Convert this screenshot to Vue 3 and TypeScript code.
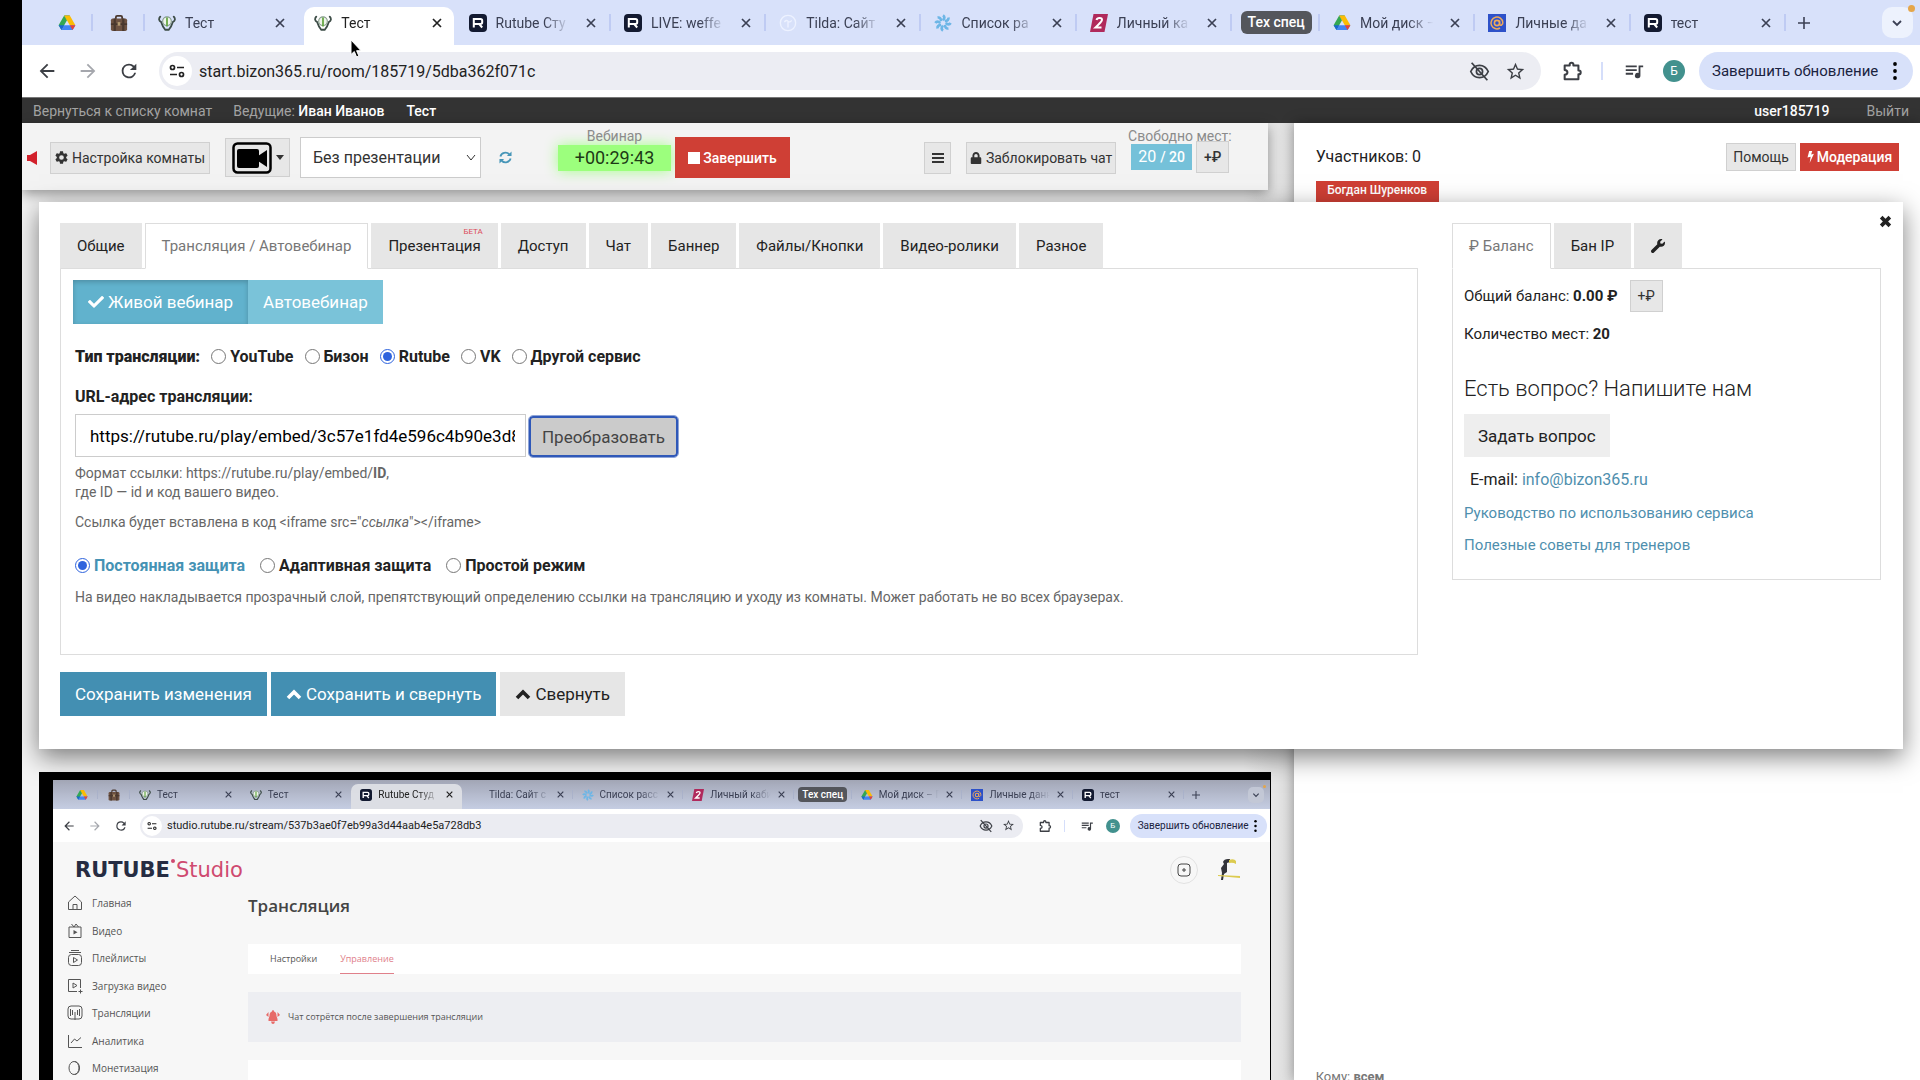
<script setup lang="ts">
import { ref } from 'vue'

interface Tab {
  title: string
  icon: string
  active?: boolean
  plain?: boolean
}

const tabs: Tab[] = [
  { title: 'Тест', icon: 'bizon', plain: true },
  { title: 'Тест', icon: 'bizon', active: true },
  { title: 'Rutube Сту', icon: 'rutube' },
  { title: 'LIVE: weffe', icon: 'rutube' },
  { title: 'Tilda: Сайт', icon: 'tilda' },
  { title: 'Список ра', icon: 'snow' },
  { title: 'Личный ка', icon: 'zed' },
]
const groupTabs: Tab[] = [
  { title: 'Мой диск –', icon: 'drive' },
  { title: 'Личные да', icon: 'mail' },
  { title: 'тест', icon: 'rutube' },
]
const streamTabs: Tab[] = [
  { title: 'Тест', icon: 'bizon', plain: true },
  { title: 'Тест', icon: 'bizon', plain: true },
  { title: 'Rutube Студ', icon: 'rutube', active: true },
  { title: 'Tilda: Сайт с', icon: '' },
  { title: 'Список расс', icon: 'snow' },
  { title: 'Личный каби', icon: 'zed' },
]
const streamGroupTabs: Tab[] = [
  { title: 'Мой диск – Г', icon: 'drive' },
  { title: 'Личные данн', icon: 'mail' },
  { title: 'тест', icon: 'rutube' },
]

const sections = ['Общие', 'Трансляция / Автовебинар', 'Презентация', 'Доступ', 'Чат', 'Баннер', 'Файлы/Кнопки', 'Видео-ролики', 'Разное']
const currentSection = ref('Трансляция / Автовебинар')

const sources = ['YouTube', 'Бизон', 'Rutube', 'VK', 'Другой сервис']
const source = ref('Rutube')
const protections = ['Постоянная защита', 'Адаптивная защита', 'Простой режим']
const protection = ref('Постоянная защита')
const streamUrl = ref('https://rutube.ru/play/embed/3c57e1fd4e596c4b90e3d8')

const studioMenu = [
  { title: 'Главная', icon: 'home' },
  { title: 'Видео', icon: 'video' },
  { title: 'Плейлисты', icon: 'playlist' },
  { title: 'Загрузка видео', icon: 'upload' },
  { title: 'Трансляции', icon: 'broadcast' },
  { title: 'Аналитика', icon: 'chart' },
  { title: 'Монетизация', icon: 'coin' },
]
</script>

<template>
  <svg class="sprite" aria-hidden="true">
    <symbol id="drive" viewBox="0 0 18 18"><path d="M6.2 1.5h5.6L9 6.3z" fill="#188038" /><path d="M6.2 1.5L9 6.3 3.5 16 .6 11.2z" fill="#34a853" /><path d="M11.8 1.5l5.6 9.7h-5.6L6.2 1.5z" fill="#fbbc04" /><path d="M6.3 11.2h11.1L14.6 16H3.5z" fill="#4285f4" /><path d="M11.8 11.2h5.6L14.6 16z" fill="#ea4335" /><path d="M.6 11.2h5.7L3.5 16z" fill="#1967d2" /></symbol>
    <symbol id="case" viewBox="0 0 20 20"><path d="M6.500 6V3.500q0-1.500 1.500-1.500h4q1.500 0 1.500 1.500V6" fill="none" stroke="#4a382f" stroke-width="2" /><rect x="1" y="5" width="18" height="14" rx="2" fill="#6d5242" /><path d="M1 10.500h18V12H1z" fill="#3f3029" /><path d="M4 5h2.500v14H4zM13.500 5H16v14h-2.500z" fill="#4a392f" /><path d="M8.500 9h3v4h-3z" fill="#b39a72" /></symbol>
    <symbol id="bizon" viewBox="0 0 20 20"><path d="M2.500 3q-3 3.500 1 6Q5 14 8 17.500h4Q15 14 16.500 9q4-2.500 1-6" fill="none" stroke="#3d4d47" stroke-width="2" stroke-linecap="round" /><circle cx="10" cy="8" r="4.800" fill="#eef4ea" stroke="#83998a" stroke-width="1.200" /><path d="M10 4v10" stroke="#67a945" stroke-width="2" /></symbol>
    <symbol id="rutube" viewBox="0 0 18 18"><rect width="18" height="18" rx="4" fill="#131a31" /><path d="M4.800 13.500V5h6.700q1.700 0 1.700 1.700v1.600q0 1.700-1.700 1.700H4.800m5.400 0l3 3.500" fill="none" stroke="#fff" stroke-width="2" /></symbol>
    <symbol id="tilda" viewBox="0 0 20 20"><circle cx="10" cy="10" r="8.500" fill="none" stroke="#edf2ff" stroke-width="1.500" /><path d="M6 9q2-3 4-1t4-1M10 9v6" fill="none" stroke="#edf2ff" stroke-width="1.500" /></symbol>
    <symbol id="snow" viewBox="0 0 20 20"><g fill="none" stroke="#6db6e6" stroke-width="3"><path d="M10 1.500q3 2 0 5.500" /><path d="M16 4q.7 3.500-3.900 3.900" /><path d="M18.500 10q-2 3-5.500 0" /><path d="M16 16q-3.500.7-3.900-3.900" /><path d="M10 18.500q-3-2 0-5.500" /><path d="M4 16q-.7-3.500 3.900-3.900" /><path d="M1.500 10q2-3 5.500 0" /><path d="M4 4q3.500-.7 3.900 3.900" /></g></symbol>
    <symbol id="zed" viewBox="0 0 18 18"><path d="M3.500 0H18l-3.500 18H0z" fill="#b02a5c" /><path d="M6.500 6q.5-2 3-2 3 0 2.400 2.300Q11.500 8 5.500 13.500h6" fill="none" stroke="#fff" stroke-width="2" /></symbol>
    <symbol id="mail" viewBox="0 0 18 18"><rect width="18" height="18" fill="#2d51c9" /><circle cx="9" cy="9" r="2.600" fill="none" stroke="#eda95c" stroke-width="1.600" /><path d="M11.600 6.500v3.500q.3 1.600 1.800 1.200Q15 10 14.800 8.500A5.900 5.900 0 1 0 12 14" fill="none" stroke="#eda95c" stroke-width="1.500" /></symbol>
    <symbol id="cross" viewBox="0 0 10 10"><path d="M1 1l8 8M9 1L1 9" stroke="currentColor" stroke-width="1.700" /></symbol>
    <symbol id="plus" viewBox="0 0 12 12"><path d="M6 0v12M0 6h12" stroke="currentColor" stroke-width="1.600" /></symbol>
    <symbol id="down" viewBox="0 0 12 12"><path d="M2 4l4 4 4-4" fill="none" stroke="currentColor" stroke-width="1.800" /></symbol>
    <symbol id="back" viewBox="0 0 24 24"><path d="M20 11H7.830l5.590-5.590L12 4l-8 8 8 8 1.410-1.410L7.830 13H20v-2z" fill="currentColor" /></symbol>
    <symbol id="forward" viewBox="0 0 24 24"><path d="M4 11h12.170l-5.590-5.590L12 4l8 8-8 8-1.410-1.410L16.170 13H4v-2z" fill="currentColor" /></symbol>
    <symbol id="reload" viewBox="0 0 24 24"><path d="M17.650 6.350A7.960 7.960 0 0 0 12 4a8 8 0 1 0 7.730 10h-2.080A6 6 0 1 1 12 6c1.660 0 3.140.690 4.220 1.780L13 11h7V4l-2.350 2.350z" fill="currentColor" /></symbol>
    <symbol id="tune" viewBox="0 0 16 16"><g fill="none" stroke="currentColor" stroke-width="1.700"><circle cx="3.500" cy="4.500" r="2" /><path d="M8 4.500h7M1 11.500h7" /><circle cx="12.500" cy="11.500" r="2" /></g></symbol>
    <symbol id="eyeoff" viewBox="0 0 24 24"><g fill="none" stroke="currentColor" stroke-width="2"><path d="M2 12c2-4.500 6-7 10-7s8 2.500 10 7c-2 4.500-6 7-10 7s-8-2.500-10-7z" /><circle cx="12" cy="12" r="3.500" /><path d="M3 2l18 20" /></g></symbol>
    <symbol id="star" viewBox="0 0 24 24"><path d="M22 9.240l-7.190-.620L12 2 9.190 8.630 2 9.240l5.460 4.730L5.820 21 12 17.270 18.180 21l-1.630-7.030L22 9.240zM12 15.400l-3.760 2.270 1-4.280-3.320-2.880 4.380-.380L12 6.100l1.710 4.040 4.380.380-3.320 2.880 1 4.280L12 15.400z" fill="currentColor" /></symbol>
    <symbol id="puzzle" viewBox="0 0 24 24"><path d="M4 6h5.500V5a2 2 0 0 1 4 0v1H19v5.500h.500a2 2 0 0 1 0 4H19V21H4v-5q3-.3 3-2.500T4 11z" fill="none" stroke="currentColor" stroke-width="2.200" stroke-linejoin="round" /></symbol>
    <symbol id="queue" viewBox="0 0 24 24"><path d="M3 6h12v2H3zM3 10h12v2H3zM3 14h8v2H3zM17 6v8.180A3 3 0 1 0 19 17V8h3V6h-5z" fill="currentColor" /></symbol>
    <symbol id="dots" viewBox="0 0 4 18"><circle cx="2" cy="2" r="1.900" /><circle cx="2" cy="9" r="1.900" /><circle cx="2" cy="16" r="1.900" /></symbol>
    <symbol id="gear" viewBox="2 2 20 20"><path d="M19.140 12.940c.040-.300.060-.610.060-.940 0-.320-.020-.640-.070-.940l2.030-1.580c.180-.140.230-.410.120-.610l-1.920-3.320c-.120-.220-.370-.290-.590-.220l-2.390.960c-.500-.380-1.030-.700-1.620-.940l-.360-2.540c-.040-.240-.240-.410-.480-.410h-3.840c-.240 0-.430.170-.470.410l-.360 2.540c-.590.240-1.130.570-1.620.940l-2.390-.960c-.220-.080-.470 0-.590.220L2.740 8.870c-.120.210-.080.470.120.610l2.030 1.580c-.050.300-.090.630-.090.940s.020.640.070.940l-2.030 1.580c-.180.140-.230.410-.120.610l1.920 3.320c.120.220.370.290.590.220l2.390-.960c.500.380 1.030.700 1.620.940l.360 2.540c.050.240.240.410.480.410h3.840c.240 0 .440-.170.470-.410l.360-2.540c.590-.240 1.130-.560 1.620-.940l2.390.960c.220.080.470 0 .590-.220l1.920-3.320c.120-.220.070-.470-.120-.610l-2.010-1.580zM12 15.600a3.600 3.600 0 1 1 0-7.200 3.600 3.600 0 0 1 0 7.200z" fill="currentColor" /></symbol>
    <symbol id="camera" viewBox="0 0 40 32"><rect x="1.500" y="1.500" width="37" height="29" rx="4" fill="#e6e6e6" stroke="#000" stroke-width="2.500" /><rect x="5" y="7" width="22" height="19" rx="2" fill="#000" /><path d="M26 14l9-6v17l-9-6z" fill="#000" /></symbol>
    <symbol id="refresh" viewBox="0 0 14 14"><g fill="none" stroke="#4796b8" stroke-width="2"><path d="M1.500 6A5.600 5.600 0 0 1 11 3.500M12.500 8A5.600 5.600 0 0 1 3 10.500" /></g><path d="M13.500.5v5h-5zM.5 13.500v-5h5z" fill="#4796b8" /></symbol>
    <symbol id="lock" viewBox="0 0 448 512"><path d="M400 224h-24v-72C376 68.200 307.800 0 224 0S72 68.200 72 152v72H48c-26.500 0-48 21.500-48 48v192c0 26.500 21.500 48 48 48h352c26.500 0 48-21.500 48-48V272c0-26.500-21.500-48-48-48zm-104 0H152v-72c0-39.700 32.300-72 72-72s72 32.300 72 72v72z" fill="currentColor" /></symbol>
    <symbol id="bars" viewBox="0 0 12 12"><path d="M0 2h12M0 6h12M0 10h12" stroke="currentColor" stroke-width="1.800" /></symbol>
    <symbol id="bolt" viewBox="0 0 8 14"><path d="M2.500 0H6L4.800 4 8 3.300 3 14l1.200-7.200L.5 7.600z" fill="currentColor" /></symbol>
    <symbol id="check" viewBox="0 60 512 400"><path d="M173.898 439.404l-166.400-166.400c-9.997-9.997-9.997-26.206 0-36.204l36.203-36.204c9.997-9.998 26.207-9.998 36.204 0L192 312.690 432.095 72.596c9.997-9.997 26.207-9.997 36.204 0l36.203 36.204c9.997 9.997 9.997 26.206 0 36.204l-294.400 294.401c-9.998 9.997-26.207 9.997-36.204-.001z" fill="currentColor" /></symbol>
    <symbol id="up" viewBox="0 0 16 12"><path d="M2 10l6-6 6 6" fill="none" stroke="currentColor" stroke-width="3.600" /></symbol>
    <symbol id="wrench" viewBox="0 0 512 512"><path d="M507.730 109.100c-2.240-9.030-13.540-12.090-20.120-5.510l-74.360 74.360-67.880-11.310-11.310-67.880 74.360-74.360c6.620-6.620 3.430-17.900-5.660-20.160-47.380-11.740-99.550.910-136.580 37.930-39.640 39.640-50.550 97.100-34.050 147.200L18.740 402.760c-24.990 24.990-24.990 65.510 0 90.500 24.990 24.990 65.510 24.990 90.500 0l213.210-213.210c50.120 16.710 107.470 5.680 147.370-34.220 37.070-37.070 49.700-89.320 37.910-136.730z" fill="currentColor" /></symbol>
    <symbol id="times" viewBox="0 0 12 12"><path d="M2 2l8 8M10 2l-8 8" stroke="currentColor" stroke-width="3.400" /></symbol>
    <symbol id="home" viewBox="0 0 16 16"><path d="M1.500 7L8 1l6.500 6v7.500h-13zM6 14.500V9.500h4v5" fill="none" stroke="currentColor" /></symbol>
    <symbol id="video" viewBox="0 0 16 16"><path d="M2 4h12v10.500H2zM4.500 1L7 4l2-3 2.500 3" fill="none" stroke="currentColor" /><path d="M6.500 7v4.500l4-2.200z" fill="currentColor" /></symbol>
    <symbol id="playlist" viewBox="0 0 16 16"><rect x="1.500" y="4.500" width="13" height="11" rx="3" fill="none" stroke="currentColor" /><path d="M2 2.500h12M4 .5h8M6.500 7.500v5l4-2.500z" fill="none" stroke="currentColor" /></symbol>
    <symbol id="upload" viewBox="0 0 16 16"><path d="M10 13.500H1.500v-12h12V10M13.500 11.500v4M11.500 13.500h4M6 5v5l4-2.500z" fill="none" stroke="currentColor" /></symbol>
    <symbol id="broadcast" viewBox="0 0 16 16"><rect x="1" y="1" width="14" height="13" rx="3" fill="none" stroke="currentColor" /><path d="M8 7v8M5.500 5v5M10.500 5v5M3.500 4v7M12.500 4v7" stroke="currentColor" /></symbol>
    <symbol id="chart" viewBox="0 0 16 16"><path d="M1.500 2v12.500H15M4 10l3.500-4L10 8l4-3.500" fill="none" stroke="currentColor" /></symbol>
    <symbol id="coin" viewBox="0 0 16 16"><ellipse cx="7" cy="8" rx="5" ry="6.500" fill="none" stroke="currentColor" /><path d="M8 1.500c6 1 6 12 0 13" fill="none" stroke="currentColor" /></symbol>
    <symbol id="bell" viewBox="0 0 14 14"><path d="M7 0q1 0 1 1.500Q10.500 2 10.500 6l1 3v2h-9V9l1-3q0-4 2.500-4.500Q6 0 7 0zM5 11.500h4Q8.500 14 7 14t-2-2.500zM0 5l2.500-3v5zM14 5l-2.500-3v5z" fill="#e76a68" /></symbol>
    <symbol id="toucan" viewBox="0 0 24 24"><path d="M6 4q1-3 5-3h2v3l-3 1v9l-3 2-1 6H4l1-7-1-5 3-4z" fill="#33343a" /><path d="M12 2q5-2 7 1v3q-3-2-7-1zM1 17l22 1v2L1 18z" fill="#dccb4f" /></symbol>
  </svg>

  <div class="screen">
    <div class="bezel"></div>
    <div class="browser">
      <div class="strip">
        <div class="pin"><svg><use href="#drive" /></svg></div>
        <div class="pin"><svg><use href="#case" /></svg></div>
        <div v-for="(tab, i) in tabs" :key="i" class="tab" :class="{ active: tab.active, plain: tab.plain }">
          <svg class="fav"><use :href="'#' + tab.icon" /></svg>
          <span class="title">{{ tab.title }}</span>
          <button class="close" aria-label="Закрыть вкладку"><svg><use href="#cross" /></svg></button>
        </div>
        <div class="group"><span>Тех спец</span></div>
        <div v-for="(tab, i) in groupTabs" :key="'g' + i" class="tab">
          <svg class="fav"><use :href="'#' + tab.icon" /></svg>
          <span class="title">{{ tab.title }}</span>
          <button class="close" aria-label="Закрыть вкладку"><svg><use href="#cross" /></svg></button>
        </div>
        <div class="strip-end">
          <button class="new" aria-label="Новая вкладка"><svg><use href="#plus" /></svg></button>
          <button class="search-tabs" aria-label="Поиск вкладок"><svg><use href="#down" /></svg></button>
        </div>
      </div>

      <div class="toolbar">
        <button class="nav-btn" aria-label="Назад"><svg><use href="#back" /></svg></button>
        <button class="nav-btn dim" aria-label="Вперёд"><svg><use href="#forward" /></svg></button>
        <button class="nav-btn" aria-label="Обновить"><svg><use href="#reload" /></svg></button>
        <div class="omnibox">
          <span class="site"><svg><use href="#tune" /></svg></span>
          <input class="url" aria-label="Адрес" value="start.bizon365.ru/room/185719/5dba362f071c" />
          <svg class="eye"><use href="#eyeoff" /></svg>
          <svg class="fave"><use href="#star" /></svg>
        </div>
        <svg class="ext"><use href="#puzzle" /></svg>
        <i class="split"></i>
        <svg class="ext"><use href="#queue" /></svg>
        <span class="avatar">Б</span>
        <button class="update">Завершить обновление<svg><use href="#dots" /></svg></button>
      </div>

      <div class="page">
        <nav class="topnav">
          <a href="#">Вернуться к списку комнат</a>
          <span class="hosts">Ведущие: <b>Иван Иванов</b></span>
          <b class="room">Тест</b>
          <b class="user">user185719</b>
          <a href="#" class="exit">Выйти</a>
        </nav>

        <div class="columns">
          <main class="stage">
            <div class="controls">
              <svg class="mute" viewBox="0 0 10 14"><path d="M0 4h3l7-4v14l-7-4H0z" fill="#d2202b" /></svg>
              <button class="btn setup"><svg class="i14"><use href="#gear" /></svg>Настройка комнаты</button>
              <button class="btn cam" aria-label="Камера"><svg><use href="#camera" /></svg><i class="caret"></i></button>
              <select class="deck" aria-label="Презентация"><option>Без презентации</option></select>
              <svg class="refresh"><use href="#refresh" /></svg>
              <div class="timer"><small>Вебинар</small><span>+00:29:43</span></div>
              <button class="finish"><i></i>Завершить</button>
              <button class="btn burger" aria-label="Меню"><svg class="i12"><use href="#bars" /></svg></button>
              <button class="btn lock"><svg class="i12"><use href="#lock" /></svg>Заблокировать чат</button>
              <div class="seats">
                <small>Свободно мест:</small>
                <div><span class="badge">20 <b>/ 20</b></span><button class="btn add">+₽</button></div>
              </div>
            </div>

            <section class="player">
              <div class="cast">
                <div class="strip mini">
                  <div class="pin"><svg><use href="#drive" /></svg></div>
                  <div class="pin"><svg><use href="#case" /></svg></div>
                  <div v-for="(tab, i) in streamTabs" :key="i" class="tab" :class="{ active: tab.active, plain: tab.plain }">
                    <svg class="fav"><use v-if="tab.icon" :href="'#' + tab.icon" /></svg>
                    <span class="title">{{ tab.title }}</span>
                    <span class="close"><svg><use href="#cross" /></svg></span>
                  </div>
                  <div class="group"><span>Тех спец</span></div>
                  <div v-for="(tab, i) in streamGroupTabs" :key="'s' + i" class="tab">
                    <svg class="fav"><use :href="'#' + tab.icon" /></svg>
                    <span class="title">{{ tab.title }}</span>
                    <span class="close"><svg><use href="#cross" /></svg></span>
                  </div>
                  <div class="strip-end"><svg><use href="#plus" /></svg><span class="search-tabs"><svg><use href="#down" /></svg></span></div>
                </div>
                <div class="toolbar mini">
                  <span class="nav-btn"><svg><use href="#back" /></svg></span>
                  <span class="nav-btn dim"><svg><use href="#forward" /></svg></span>
                  <span class="nav-btn"><svg><use href="#reload" /></svg></span>
                  <div class="omnibox">
                    <span class="site"><svg><use href="#tune" /></svg></span>
                    <span class="url">studio.rutube.ru/stream/537b3ae0f7eb99a3d44aab4e5a728db3</span>
                    <svg class="eye"><use href="#eyeoff" /></svg>
                    <svg class="fave"><use href="#star" /></svg>
                  </div>
                  <svg class="ext"><use href="#puzzle" /></svg>
                  <i class="split"></i>
                  <svg class="ext"><use href="#queue" /></svg>
                  <span class="avatar">Б</span>
                  <span class="update">Завершить обновление<svg><use href="#dots" /></svg></span>
                </div>
                <div class="studio">
                  <header class="studio-head">
                    <div class="logo"><b>RUTUBE</b><i></i><span>Studio</span></div>
                    <span class="create"><svg viewBox="0 0 14 14"><rect x="1" y="1" width="12" height="12" rx="3" fill="none" stroke="#444" /><path d="M7 5v4M5 7h4" stroke="#444" /></svg></span>
                    <svg class="bird"><use href="#toucan" /></svg>
                  </header>
                  <div class="studio-body">
                    <ul class="side">
                      <li v-for="item in studioMenu" :key="item.title"><svg><use :href="'#' + item.icon" /></svg>{{ item.title }}</li>
                    </ul>
                    <div class="work">
                      <h2>Трансляция</h2>
                      <div class="work-tabs"><span>Настройки</span><span class="on">Управление</span></div>
                      <div class="notice"><svg><use href="#bell" /></svg>Чат сотрётся после завершения трансляции</div>
                      <div class="blank"></div>
                    </div>
                  </div>
                </div>
              </div>
            </section>
          </main>

          <aside class="chat">
            <div class="chat-head">
              <span class="count">Участников: 0</span>
              <button class="btn help">Помощь</button>
              <button class="mod"><svg><use href="#bolt" /></svg>Модерация</button>
            </div>
            <span class="member">Богдан Шуренков</span>
            <div class="to">Кому: <b>всем</b></div>
          </aside>
        </div>

        <section class="settings" role="dialog" aria-label="Настройка комнаты">
          <button class="dismiss" aria-label="Закрыть"><svg><use href="#times" /></svg></button>
          <div class="main-part">
            <div class="sheet-tabs">
              <button v-for="s in sections" :key="s" :class="{ on: s === currentSection }" @click="currentSection = s">
                {{ s }}<sup v-if="s === 'Презентация'">БЕТА</sup>
              </button>
            </div>
            <div class="sheet form">
              <div class="mode">
                <button class="on"><svg><use href="#check" /></svg>Живой вебинар</button>
                <button>Автовебинар</button>
              </div>
              <div class="fields">
                <div class="radios sources">
                  <b>Тип трансляции:</b>
                  <label v-for="s in sources" :key="s"><input v-model="source" type="radio" name="source" :value="s" />{{ s }}</label>
                </div>
                <label class="caption" for="stream-url">URL-адрес трансляции:</label>
                <div class="url-row">
                  <input id="stream-url" v-model="streamUrl" type="text" />
                  <button>Преобразовать</button>
                </div>
                <p class="hint">Формат ссылки: https://rutube.ru/play/embed/<b>ID</b>,<br />где ID — id и код вашего видео.</p>
                <p class="hint second">Ссылка будет вставлена в код &lt;iframe src="<em>ссылка</em>"&gt;&lt;/iframe&gt;</p>
                <div class="radios guard">
                  <label v-for="p in protections" :key="p" :class="{ picked: p === protection }"><input v-model="protection" type="radio" name="guard" :value="p" />{{ p }}</label>
                </div>
                <p class="hint">На видео накладывается прозрачный слой, препятствующий определению ссылки на трансляцию и уходу из комнаты. Может работать не во всех браузерах.</p>
              </div>
            </div>
            <div class="actions">
              <button class="primary">Сохранить изменения</button>
              <button class="primary"><svg><use href="#up" /></svg>Сохранить и свернуть</button>
              <button><svg><use href="#up" /></svg>Свернуть</button>
            </div>
          </div>
          <div class="side-part">
            <div class="sheet-tabs">
              <button class="on">₽ Баланс</button>
              <button>Бан IP</button>
              <button aria-label="Сервис"><svg><use href="#wrench" /></svg></button>
            </div>
            <div class="sheet info">
              <div class="balance">Общий баланс:&nbsp;<b>0.00 ₽</b><button class="btn add">+₽</button></div>
              <p>Количество мест: <b>20</b></p>
              <h3>Есть вопрос? Напишите нам</h3>
              <button class="ask">Задать вопрос</button>
              <p class="mail">E-mail: <a href="#">info@bizon365.ru</a></p>
              <a class="doc" href="#">Руководство по использованию сервиса</a>
              <a class="doc" href="#">Полезные советы для тренеров</a>
            </div>
          </div>
        </section>
      </div>
    </div>
    <svg class="cursor" viewBox="0 0 12 19"><path d="M1 1v14.500l3.300-3 2.300 5.500 2.300-1-2.300-5.300H11z" fill="#000" stroke="#fff" /></svg>
  </div>
</template>

<style>
body { margin: 0; }
</style>

<style scoped>
* { box-sizing: border-box; }
.sprite { position: absolute; width: 0; height: 0; }
.screen { position: relative; display: flex; height: 100vh; overflow: hidden; font: 15px/20px Roboto, "Liberation Sans", sans-serif; color: #222; background: #000; }
button, input, select { font-family: inherit; margin: 0; }
button { border: 0; padding: 0; color: inherit; cursor: pointer; white-space: nowrap; }
svg { display: block; flex: none; }
.bezel { flex: 0 0 22px; background: #000; }
.browser { flex: 1; min-width: 0; display: flex; flex-direction: column; background: #fff; }

/* tab strip */
.strip { display: flex; height: 45px; padding-left: 19px; background: #d8e1fa; flex: none; color: #3b4054; font-size: 14px; }
.pin { width: 52px; display: flex; align-items: center; justify-content: center; position: relative; }
.pin svg { width: 18px; height: 18px; }
.tab { flex: 1 1 0; min-width: 0; display: flex; align-items: center; padding: 0 15px 0 13px; position: relative; }
.pin::after, .tab::after, .group::after { content: ""; position: absolute; right: 0; top: 14px; bottom: 14px; width: 2px; background: #bfcbf3; }
.tab.active::after, .tab.plain::after { display: none; }
.fav { width: 18px; height: 18px; }
.title { flex: 1; min-width: 0; margin: 0 15px 0 9px; overflow: hidden; white-space: nowrap; mask-image: linear-gradient(90deg, #000 65%, transparent 98%); }
.close { background: none; }
.close svg { width: 10px; height: 10px; }
.tab.active { margin: 7px 2px 0 4px; padding: 0 12px 7px 10px; background: #fff; border-radius: 10px 10px 0 0; color: #222; }
.group { width: 88px; display: flex; align-items: center; justify-content: center; position: relative; }
.group span { padding: 0 7px; height: 23px; line-height: 23px; border-radius: 6px; background: #54565c; color: #fff; font-weight: 500; }
.strip-end { width: 134px; display: flex; align-items: center; justify-content: space-between; padding: 0 7px 0 12px; }
.strip-end svg { width: 12px; height: 12px; }
.strip-end .new { background: none; }
.search-tabs { position: relative; width: 31px; height: 31px; display: flex; align-items: center; justify-content: center; border-radius: 10px; background: #edf2fd; }
.search-tabs::after { content: ""; position: absolute; right: -2px; top: -2px; width: 7px; height: 7px; border-radius: 50%; background: #e5a64a; }

/* address bar */
.toolbar { display: flex; align-items: center; height: 52px; padding: 0 7px 0 14px; flex: none; color: #3c3f45; background: #fff; }
.nav-btn { width: 22px; margin-right: 19px; background: none; }
.nav-btn svg { width: 22px; height: 22px; }
.nav-btn.dim { color: #a5a7ad; }
.omnibox { flex: 1; display: flex; align-items: center; height: 38px; padding: 0 15px 0 3px; border-radius: 19px; background: #ecedf3; }
.site { width: 30px; height: 30px; border-radius: 50%; background: #fff; display: flex; align-items: center; justify-content: center; color: #222; }
.site svg { width: 16px; height: 16px; }
.url { flex: 1; min-width: 0; padding: 0; border: 0; background: none; margin-left: 7px; font-size: 16px; color: #222; outline: 0; }
.eye { width: 23px; height: 21px; margin-right: 14px; }
.fave { width: 21px; height: 21px; }
.ext { width: 22px; height: 22px; margin-left: 20px; }
.split { width: 2px; height: 18px; margin-left: 18px; background: #d5defa; }
.avatar { width: 22px; height: 22px; margin: 0 14px 0 18px; border-radius: 50%; background: #42918e; color: #fff; text-align: center; font-size: 12px; line-height: 22px; }
.update { display: flex; align-items: center; justify-content: space-between; height: 38px; width: 214px; padding: 0 16px 0 13px; border-radius: 19px; background: #d8e1fa; color: #1a2340; font-size: 15px; }
.update svg { width: 4px; height: 18px; }

/* room page */
.page { position: relative; flex: 1; min-height: 0; display: flex; flex-direction: column; background: #f0f0f0; }
.topnav { display: flex; align-items: center; height: 26px; flex: none; padding: 0 11px; background: #333; border-top: 1px solid #777; color: #a3a3a3; font-size: 14px; }
.topnav a { color: inherit; text-decoration: none; }
.topnav b { color: #fff; font-weight: 500; }
.hosts { margin-left: 21px; }
.topnav .room { margin-left: 22px; }
.topnav .user { margin-left: auto; }
.topnav .exit { margin-left: 37px; }
.columns { flex: 1; min-height: 0; display: flex; }
.stage { flex: 1; min-width: 0; padding-right: 26px; display: flex; flex-direction: column; background: linear-gradient(90deg, #f4f4f4, #f4f4f4 96%, #dcdcdc); }
.controls { display: flex; align-items: center; height: 67px; flex: none; padding: 2px 36px 0 5px; background: #f3f3f3; box-shadow: 0 4px 12px rgba(0, 0, 0, .4); }
.mute { width: 10px; height: 14px; }
.btn { display: flex; align-items: center; justify-content: center; gap: 4px; height: 32px; border: 1px solid #d0d0d0; background: #e7e7e7; color: #333; font-size: 14px; }
.i14 { width: 13px; height: 13px; }
.i12 { width: 12px; height: 12px; }
.setup { width: 160px; margin-left: 13px; }
.cam { width: 65px; height: 39px; margin-left: 15px; }
.cam svg { width: 40px; height: 32px; }
.caret { border: 4px solid transparent; border-top: 5px solid #333; border-bottom: 0; }
.deck { width: 181px; height: 41px; margin-left: 10px; padding: 0 26px 0 12px; border: 1px solid #ccc; border-radius: 0; font-size: 16px; color: #333; appearance: none; background: #fff url("data:image/svg+xml,%3Csvg xmlns='http://www.w3.org/2000/svg' width='10' height='8'%3E%3Cpath d='M1 1l4 5 4-5' fill='none' stroke='%23333'/%3E%3C/svg%3E") no-repeat right 4px center; }
.refresh { width: 13px; height: 13px; margin-left: 18px; }
.timer, .seats { align-self: flex-start; margin-top: 2px; }
small { display: block; height: 18px; line-height: 18px; font-size: 14px; color: #8b8b8b; white-space: nowrap; }
.timer { margin-left: 46px; text-align: center; }
.timer span { display: block; width: 113px; height: 26px; line-height: 26px; background: #9cff7d; box-shadow: 0 0 14px #a5ff8a; color: #1d3a16; font-size: 18px; }
.finish { display: flex; align-items: center; justify-content: center; gap: 3px; width: 115px; height: 41px; margin: 0 auto 0 4px; background: #cf3f35; color: #fff; font-size: 14px; font-weight: 500; }
.finish i { width: 12px; height: 12px; background: #fff; }
.burger { width: 27px; }
.lock { width: 150px; margin: 0 12px 0 15px; }
.seats div { display: flex; gap: 4px; margin: -4px 0 0 3px; align-items: center; }
.badge { width: 61px; height: 26px; line-height: 26px; text-align: center; background: #75c1d9; color: #fff; font-size: 16px; }
.badge b { font-size: 14px; font-weight: 500; }
.add { width: 33px; font-weight: 500; }

.player { flex: 1; min-height: 0; margin: 582px -3px 0 17px; padding: 8px 1px 0 14px; background: #000; overflow: hidden; }
.chat { flex: 0 0 33%; display: flex; flex-direction: column; align-items: flex-start; padding: 19px 21px 0 22px; background: #fff; box-shadow: 0 0 12px rgba(0, 0, 0, .35); }
.chat-head { align-self: stretch; display: flex; align-items: center; height: 30px; }
.count { flex: 1; font-size: 16px; }
.help { width: 70px; height: 28px; }
.mod { display: flex; align-items: center; justify-content: center; gap: 3px; width: 99px; height: 28px; margin-left: 4px; background: #cf3f35; color: #fff; font-size: 14px; font-weight: 500; }
.mod svg { width: 7px; height: 12px; }
.member { margin-top: 9px; width: 123px; height: 21px; line-height: 19px; background: #cf3f35; color: #fff; text-align: center; font-size: 12px; font-weight: 500; }
.to { margin-top: auto; height: 13px; line-height: 20px; font-size: 13px; color: #777; }

/* settings sheet */
.settings { position: absolute; z-index: 2; top: 105px; left: 17px; right: 17px; display: flex; gap: 34px; padding: 21px 22px 33px 21px; background: #fff; box-shadow: 0 8px 24px rgba(0, 0, 0, .5); }
.main-part { flex: 1; min-width: 0; }
.side-part { flex: 0 0 429px; }
.dismiss { position: absolute; right: 11px; top: 13px; background: none; }
.dismiss svg { width: 13px; height: 13px; }
.sheet-tabs { display: flex; gap: 3px; height: 46px; margin-bottom: -1px; }
.sheet-tabs button { position: relative; padding: 0 16px; border: 1px solid #e6e6e6; border-bottom: 1px solid #ddd; background: #e6e6e6; font-size: 15px; color: #222; }
.sheet-tabs button.on { background: #fff; border-color: #ddd; border-bottom-color: #fff; color: #777; }
.sheet-tabs sup { position: absolute; right: 14px; top: 2px; font-size: 8px; line-height: 12px; color: #dc4a5a; }
.sheet-tabs svg { width: 14px; height: 14px; }
.sheet { border: 1px solid #ddd; }
.form { padding: 11px 12px 47px; }
.mode { display: flex; height: 44px; color: #fff; }
.mode button { display: flex; align-items: center; gap: 4px; padding: 0 15px; background: #7ac3d9; font-size: 17px; }
.mode button.on { background: #61b2cd; box-shadow: inset 0 2px 5px rgba(0, 0, 0, .2); }
.mode svg { width: 16px; height: 14px; }
.fields { padding: 21px 2px 0; }
.radios { display: flex; align-items: center; height: 24px; font-size: 16px; font-weight: 700; }
.radios b { margin-right: 11px; }
.radios label { display: flex; align-items: center; margin-right: 11px; }
.guard label { margin-right: 15px; }
.radios input { width: 15px; height: 15px; margin: 0 4px 2px 0; accent-color: #2e63dd; }
.picked { color: #4592b4; }
.caption { display: block; height: 24px; line-height: 24px; margin: 16px 0 5px; font-size: 16px; font-weight: 700; }
.url-row { display: flex; gap: 3px; height: 43px; }
.url-row input { width: 451px; padding: 0 10px 0 14px; border: 1px solid #ccc; font-size: 17px; color: #000; }
.url-row button { height: 41px; margin-top: 2px; width: 149px; border: 2px solid #2f58b8; outline: 1px solid #8fa5d8; border-radius: 4px; background: #cbcbcb; color: #444; font-size: 17px; }
.hint { margin: 7px 0 0; font-size: 14px; line-height: 19px; color: #666; }
.hint b { font-weight: 700; }
.hint.second { margin: 11px 0 22px; }
.guard + .hint { margin-top: 10px; }
.actions { display: flex; gap: 4px; height: 44px; margin-top: 17px; }
.actions button { display: flex; align-items: center; gap: 4px; padding: 0 15px; background: #e6e6e6; font-size: 17px; }
.actions .primary { background: #438fb2; color: #fff; }
.actions svg { width: 16px; height: 12px; }

.info { height: 312px; padding: 11px; }
.balance { display: flex; align-items: center; height: 32px; }
.balance .add { margin-left: 12px; font-weight: 400; }
.info p { margin: 12px 0 0; line-height: 20px; }
.info h3 { margin: 30px 0 10px; font-size: 22px; line-height: 30px; font-weight: 300; }
.ask { display: block; height: 43px; padding: 0 14px; background: #eee; font-size: 17px; }
.info .mail { margin: 13px 6px; font-size: 16px; }
.info a { color: #4f8fae; text-decoration: none; }
.doc { display: block; margin-bottom: 12px; }

/* streamed desktop */
.cast { height: 100%; overflow: hidden; background: #f7f7f7; font-size: 10px; }
.mini.strip { height: 29px; padding-left: 13px; background: linear-gradient(#a4a8b8, #c5cde2); font-size: 10px; }
.mini .pin { width: 32px; }
.mini .pin svg, .mini .fav { width: 12px; height: 12px; }
.mini .tab { padding: 0 9px; }
.mini .title { margin: 0 6px; }
.mini .close svg { width: 7px; height: 7px; }
.mini .pin::after, .mini .tab::after, .mini .group::after { width: 1px; top: 10px; bottom: 10px; background: #aab2ca; }
.mini .tab.active { margin: 4px 0 0; padding-bottom: 4px; border-radius: 7px 7px 0 0; background: #dcdee4; }
.mini .group { width: 58px; }
.mini .group span { height: 15px; line-height: 15px; padding: 0 4px; border-radius: 4px; }
.mini .strip-end { width: 86px; padding: 0 6px 0 8px; }
.mini .strip-end svg { width: 8px; height: 8px; }
.mini .search-tabs { width: 16px; height: 16px; border-radius: 5px; background: #c3c8d6; }
.mini .search-tabs::after { width: 3px; height: 3px; }
.mini.toolbar { height: 33px; padding: 0 3px 0 9px; }
.mini .nav-btn { width: 14px; margin-right: 12px; }
.mini .nav-btn svg { width: 14px; height: 14px; }
.mini .omnibox { height: 24px; padding: 0 8px 0 2px; border-radius: 12px; background: #ebecf2; }
.mini .site { width: 20px; height: 20px; }
.mini .site svg { width: 10px; height: 10px; }
.mini .url { font-size: 11px; margin-left: 5px; }
.mini .eye { width: 14px; height: 14px; margin-right: 9px; }
.mini .fave { width: 13px; height: 13px; }
.mini .ext { width: 14px; height: 14px; margin-left: 15px; }
.mini .split { width: 1px; height: 12px; margin-left: 12px; }
.mini .avatar { width: 14px; height: 14px; line-height: 14px; font-size: 8px; margin: 0 10px 0 12px; }
.mini .update { width: 137px; height: 24px; padding: 0 10px 0 8px; font-size: 10px; }
.mini .update svg { width: 3px; height: 12px; }
.studio { padding: 0 29px 0 14px; font-family: "Open Sans", "Noto Sans", sans-serif; color: #555; }
.studio-head { display: flex; align-items: center; height: 50px; padding: 6px 0 0 8px; }
.logo { display: flex; align-items: center; flex: 1; font: 21px/24px "DejaVu Sans", sans-serif; color: #cf4a70; }
.logo b { color: #262c42; }
.logo i { width: 4px; height: 4px; margin: 0 1px 18px; border-radius: 50%; background: #cf4a70; }
.create { width: 28px; height: 28px; display: flex; align-items: center; justify-content: center; border: 1px solid #e2e2e2; border-radius: 50%; margin-right: 19px; }
.create svg { width: 14px; height: 14px; }
.bird { width: 24px; height: 24px; }
.studio-body { display: flex; }
.side { flex: 0 0 181px; margin: 0; padding: 0; list-style: none; font-size: 10px; }
.side li { display: flex; align-items: center; gap: 9px; height: 22px; margin-bottom: 6px; line-height: 22px; }
.side li:nth-child(2n) { margin-bottom: 5px; }
.side svg { width: 16px; height: 16px; }
.work { flex: 1; }
.work h2 { margin: 2px 0 26px; font-size: 17px; line-height: 24px; font-weight: 600; color: #444; }
.work-tabs { display: flex; gap: 23px; height: 30px; padding-left: 22px; background: #fff; font-size: 9px; line-height: 30px; }
.work-tabs .on { color: #e0808a; border-bottom: 1px solid #e0808a; }
.notice { display: flex; align-items: center; gap: 8px; height: 50px; margin: 18px 0; padding-left: 18px; background: #edeef2; font-size: 9px; }
.notice svg { width: 14px; height: 14px; }
.blank { height: 20px; background: #fff; }
.cursor { position: absolute; z-index: 3; left: 350px; top: 39px; width: 12px; height: 19px; }
</style>
